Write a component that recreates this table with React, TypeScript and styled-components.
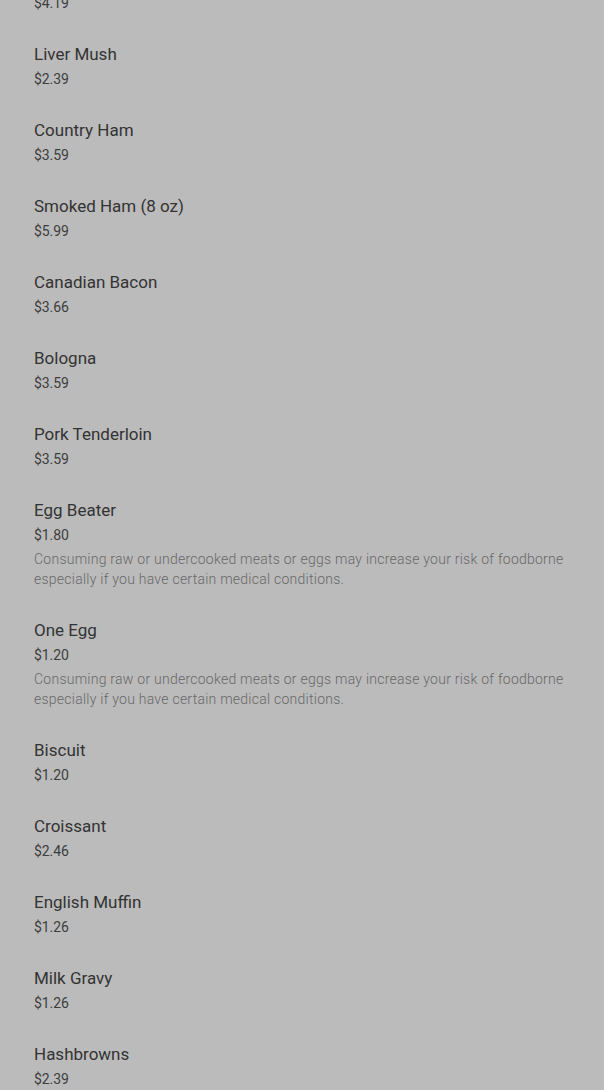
import styled, { createGlobalStyle } from "styled-components";

const GlobalStyle = createGlobalStyle`
  html, body {
    margin: 0;
    padding: 0;
    background: #bbbbbb;
    font-family: Roboto, "Noto Sans", Arial, sans-serif;
  }
`;

const Notice =
  "Consuming raw or undercooked meats or eggs may increase your risk of foodborne especially if you have certain medical conditions.";

type MenuItem = {
  name: string;
  price: string;
  note?: string;
};

const items: MenuItem[] = [
  { name: "Sausage Patty", price: "$4.19" },
  { name: "Liver Mush", price: "$2.39" },
  { name: "Country Ham", price: "$3.59" },
  { name: "Smoked Ham (8 oz)", price: "$5.99" },
  { name: "Canadian Bacon", price: "$3.66" },
  { name: "Bologna", price: "$3.59" },
  { name: "Pork Tenderloin", price: "$3.59" },
  { name: "Egg Beater", price: "$1.80", note: Notice },
  { name: "One Egg", price: "$1.20", note: Notice },
  { name: "Biscuit", price: "$1.20" },
  { name: "Croissant", price: "$2.46" },
  { name: "English Muffin", price: "$1.26" },
  { name: "Milk Gravy", price: "$1.26" },
  { name: "Hashbrowns", price: "$2.39" },
];

// list is shown scrolled part way, so the first row sits mostly above the fold
const List = styled.ul`
  list-style: none;
  margin: -49px 0 0;
  padding: 0 34px;
`;

const Row = styled.li`
  display: flex;
  flex-direction: column;
  padding: 15px 0 14px;
`;

const Name = styled.div`
  font-size: 17px;
  line-height: 24px;
  color: #333333;
`;

const Price = styled.div`
  margin-top: 3px;
  font-size: 14px;
  line-height: 20px;
  color: #3d3d3d;
  letter-spacing: -0.1px;
`;

const Note = styled.p`
  margin: 4px 0 0;
  font-size: 14px;
  line-height: 20px;
  font-weight: 300;
  letter-spacing: 0.25px;
  color: #686868;
`;

export default function App() {
  return (
    <>
      <GlobalStyle />
      <List>
        {items.map((item) => (
          <Row key={item.name}>
            <Name>{item.name}</Name>
            <Price>{item.price}</Price>
            {item.note ? <Note>{item.note}</Note> : null}
          </Row>
        ))}
      </List>
    </>
  );
}
